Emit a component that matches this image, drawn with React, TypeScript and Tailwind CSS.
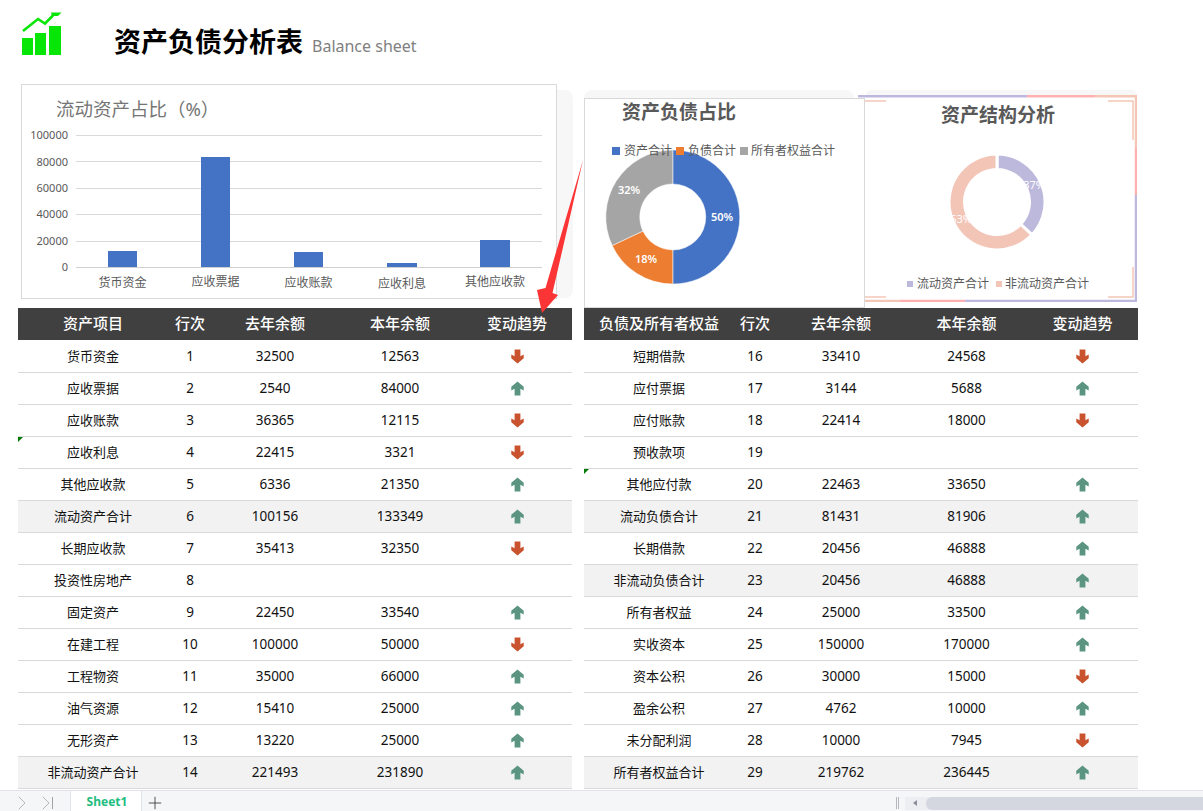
import { ChevronRight, Plus } from "lucide-react";

type Row = [string, number, number | null, number | null, "up" | "down" | null, boolean?];

const leftRows: Row[] = [
  ["货币资金", 1, 32500, 12563, "down"],
  ["应收票据", 2, 2540, 84000, "up"],
  ["应收账款", 3, 36365, 12115, "down"],
  ["应收利息", 4, 22415, 3321, "down"],
  ["其他应收款", 5, 6336, 21350, "up"],
  ["流动资产合计", 6, 100156, 133349, "up", true],
  ["长期应收款", 7, 35413, 32350, "down"],
  ["投资性房地产", 8, null, null, null],
  ["固定资产", 9, 22450, 33540, "up"],
  ["在建工程", 10, 100000, 50000, "down"],
  ["工程物资", 11, 35000, 66000, "up"],
  ["油气资源", 12, 15410, 25000, "up"],
  ["无形资产", 13, 13220, 25000, "up"],
  ["非流动资产合计", 14, 221493, 231890, "up", true],
];

const rightRows: Row[] = [
  ["短期借款", 16, 33410, 24568, "down"],
  ["应付票据", 17, 3144, 5688, "up"],
  ["应付账款", 18, 22414, 18000, "down"],
  ["预收款项", 19, null, null, null],
  ["其他应付款", 20, 22463, 33650, "up"],
  ["流动负债合计", 21, 81431, 81906, "up", true],
  ["长期借款", 22, 20456, 46888, "up"],
  ["非流动负债合计", 23, 20456, 46888, "up", true],
  ["所有者权益", 24, 25000, 33500, "up"],
  ["实收资本", 25, 150000, 170000, "up"],
  ["资本公积", 26, 30000, 15000, "down"],
  ["盈余公积", 27, 4762, 10000, "up"],
  ["未分配利润", 28, 10000, 7945, "down"],
  ["所有者权益合计", 29, 219762, 236445, "up", true],
];

function arc(cx: number, cy: number, r0: number, r1: number, from: number, to: number) {
  const p = (r: number, f: number) => {
    const a = f * Math.PI * 2 - Math.PI / 2;
    return `${(cx + r * Math.cos(a)).toFixed(2)} ${(cy + r * Math.sin(a)).toFixed(2)}`;
  };
  const large = to - from > 0.5 ? 1 : 0;
  return `M${p(r1, from)}A${r1} ${r1} 0 ${large} 1 ${p(r1, to)}L${p(r0, to)}A${r0} ${r0} 0 ${large} 0 ${p(r0, from)}Z`;
}

function TrendIcon({ dir }: { dir: "up" | "down" | null }) {
  if (!dir) return null;
  if (dir === "down") {
    return (
      <svg width="13" height="15" viewBox="0 0 12 14" className="block">
        <path d="M3.3 0.5h5.4v6.2l3.1-1.6v3.6L6 13.5 0.2 8.7V5.1l3.1 1.6z" fill="#c9532f" />
      </svg>
    );
  }
  return (
    <svg width="13" height="15" viewBox="0 0 12 14" className="block">
      <path d="M3.3 13.5h5.4V7.3l3.1 1.6V5.3L6 0.5 0.2 5.3v3.6l3.1-1.6z" fill="#5b9582" />
    </svg>
  );
}

function DataTable({
  title,
  cols,
  rows,
  markAt,
}: {
  title: string;
  cols: string;
  rows: Row[];
  markAt: number;
}) {
  return (
    <div className="w-[554px]">
      <div className={`grid ${cols} h-8 items-center bg-[#404040] pb-px text-center text-[15px] font-medium text-white`}>
        <div>{title}</div>
        <div>行次</div>
        <div>去年余额</div>
        <div>本年余额</div>
        <div>变动趋势</div>
      </div>
      <div className="pt-px">
        {rows.map((r, i) => (
          <div
            key={r[1]}
            className={`relative grid ${cols} h-8 items-center border-b border-[#d9d9d9] text-center text-[13.5px] text-[#111] ${
              r[5] ? "bg-[#f2f2f2]" : "bg-white"
            }`}
          >
            {i === markAt && (
              <span className="absolute top-0 left-0 h-0 w-0 border-t-[5px] border-r-[5px] border-t-[#007a00] border-r-transparent" />
            )}
            <div className="text-[13px]">{r[0]}</div>
            <div>{r[1]}</div>
            <div>{r[2]}</div>
            <div>{r[3]}</div>
            <div className="flex justify-center">
              <TrendIcon dir={r[4]} />
            </div>
          </div>
        ))}
      </div>
    </div>
  );
}

function BarChart() {
  const grid = [135, 161, 188, 214, 241];
  const ticks = ["100000", "80000", "60000", "40000", "20000", "0"];
  const bars = [
    { x: 108, w: 29, top: 251, label: "货币资金", ly: 286.5 },
    { x: 201, w: 29, top: 157, label: "应收票据", ly: 286 },
    { x: 294, w: 29, top: 252, label: "应收账款", ly: 286.5 },
    { x: 387, w: 30, top: 263, label: "应收利息", ly: 287.5 },
    { x: 480, w: 30, top: 240, label: "其他应收款", ly: 286 },
  ];
  return (
    <svg viewBox="22 85 534 213" className="block h-full w-full">
      <text x="56" y="116" fontSize="18.5" fill="#757575">
        流动资产占比（%）
      </text>
      {grid.map((y) => (
        <line key={y} x1="76" x2="542" y1={y + 0.5} y2={y + 0.5} stroke="#d9d9d9" />
      ))}
      <line x1="76" x2="542" y1="267.5" y2="267.5" stroke="#d0d0d0" />
      {ticks.map((t, i) => (
        <text key={t} x="68" y={[139, 166, 192, 218, 245, 271][i]} fontSize="11" textAnchor="end" fill="#595959">
          {t}
        </text>
      ))}
      {bars.map((b) => (
        <g key={b.label}>
          <rect x={b.x} y={b.top} width={b.w} height={267 - b.top} fill="#4472c4" />
          <text x={b.x + b.w / 2} y={b.ly} fontSize="12" textAnchor="middle" fill="#595959">
            {b.label}
          </text>
        </g>
      ))}
    </svg>
  );
}

function RatioChart() {
  const cx = 672.8;
  const cy = 217;
  return (
    <svg viewBox="585 99 279 208" className="block h-full w-full">
      <text x="622" y="119" fontSize="19" fontWeight="600" fill="#595959">
        资产负债占比
      </text>
      <path d={arc(cx, cy, 33, 67, 0, 0.5)} fill="#4472c4" stroke="#fff" strokeWidth="0.5" />
      <path d={arc(cx, cy, 33, 67, 0.5, 0.68)} fill="#ed7d31" stroke="#fff" strokeWidth="0.5" />
      <path d={arc(cx, cy, 33, 67, 0.68, 1)} fill="#a5a5a5" stroke="#fff" strokeWidth="0.5" />
      <rect x="612" y="147" width="8" height="8" fill="#4472c4" />
      <text x="624" y="155" fontSize="12" fill="#595959">
        资产合计
      </text>
      <rect x="676" y="147" width="8" height="8" fill="#ed7d31" />
      <text x="688" y="155" fontSize="12" fill="#595959">
        负债合计
      </text>
      <rect x="740" y="147" width="8" height="8" fill="#a5a5a5" />
      <text x="751" y="155" fontSize="12" fill="#595959">
        所有者权益合计
      </text>
      <g fontSize="11" fontWeight="600" fill="#fff" textAnchor="middle">
        <text x="722" y="221">
          50%
        </text>
        <text x="646" y="263">
          18%
        </text>
        <text x="629" y="194">
          32%
        </text>
      </g>
    </svg>
  );
}

function StructureChart() {
  const cx = 997;
  const cy = 202;
  return (
    <svg viewBox="858 95 279 207" className="block h-full w-full">
      {/* 边框 */}
      <g fill="none" strokeWidth="2.5">
        <path d="M858 96.2H1027" stroke="#bdb9de" />
        <path d="M1027 96.2H1095" stroke="#ffb1b1" />
        <path d="M1095 96.2H1136V148" stroke="#f4c6b6" />
        <path d="M1136 148V195" stroke="#ffb1b1" />
        <path d="M1136 195V301H965" stroke="#bdb9de" />
        <path d="M965 301H900" stroke="#ffb1b1" />
        <path d="M900 301H858" stroke="#f4c6b6" />
      </g>
      <g fill="none" stroke="#f4c6b6" strokeWidth="1.5">
        <path d="M865 101H886" />
        <path d="M1108 101H1133V140" />
        <path d="M1133 267V297H1108" />
        <path d="M865 297H886" />
      </g>
      <text x="998" y="122" fontSize="19" fontWeight="700" fill="#595959" textAnchor="middle">
        资产结构分析
      </text>
      <path d={arc(cx, cy, 32.5, 48, 0, 0.37)} fill="#bdb9dc" stroke="#fff" strokeWidth="3" />
      <path d={arc(cx, cy, 32.5, 48, 0.37, 1)} fill="#f3c5b6" stroke="#fff" strokeWidth="3" />
      <g fontSize="11" fill="#fff" textAnchor="middle">
        <text x="1034" y="189">
          37%
        </text>
        <text x="961" y="223">
          63%
        </text>
      </g>
      <rect x="907" y="281" width="6" height="6" fill="#bdb9dc" />
      <text x="917" y="288" fontSize="12" fill="#595959">
        流动资产合计
      </text>
      <rect x="996" y="281" width="6" height="6" fill="#f3c5b6" />
      <text x="1005" y="288" fontSize="12" fill="#595959">
        非流动资产合计
      </text>
    </svg>
  );
}

export default function App() {
  return (
    <div className="relative flex h-[811px] w-[1203px] flex-col overflow-hidden bg-white font-['Noto_Sans','Noto_Sans_CJK_SC',sans-serif]">
      {/* 标题 */}
      <div className="flex h-[84px] shrink-0 items-start pt-[10px] pl-[21px]">
        <svg width="42" height="46" viewBox="21 10 42 46" className="block">
          <path d="M23 31L38 19L45 23.5L53 15.5" fill="none" stroke="#08e608" strokeWidth="2.6" />
          <path d="M51 12.5H61.5L58 16L52 16z" fill="#08e608" />
          <rect x="22" y="38" width="11" height="17" fill="#08e608" />
          <rect x="35" y="33" width="11" height="22" fill="#08e608" />
          <rect x="49" y="26" width="12" height="29" fill="#08e608" />
        </svg>
        <div className="mt-[13px] ml-[51px] flex items-baseline">
          <span className="text-[27px] leading-[38px] font-bold text-black">资产负债分析表</span>
          <span className="ml-[9px] text-[16px] text-[#808080]">Balance sheet</span>
        </div>
      </div>

      {/* 图表 */}
      <div className="relative flex h-[224px] shrink-0 items-start">
        {/* 图表背后的浅灰底 */}
        <div className="absolute top-[6px] left-[584px] h-[8px] w-[270px] rounded-t-lg bg-[#f7f7f7]" />
        <div className="absolute top-[6px] left-[866px] h-[5px] w-[271px] rounded-t-lg bg-[#f7f7f7]" />

        <div className="relative ml-[21px] h-[215px] w-[536px] border border-[#d9d9d9] bg-white">
          <BarChart />
        </div>
        <div className="mt-[6px] h-[208px] w-[16px] rounded-r-lg bg-[#f7f7f7]" />
        <div className="relative z-10 mt-[14px] ml-[11px] h-[210px] w-[281px] border border-[#d9d9d9] bg-white">
          <RatioChart />
        </div>
        <div className="mt-[11px] -ml-[7px] h-[207px] w-[279px]">
          <StructureChart />
        </div>
      </div>

      {/* 数据表 */}
      <div className="flex h-[482px] shrink-0 gap-3 pl-[18px]">
        <DataTable
          title="资产项目"
          cols="grid-cols-[150px_44px_126px_124px_110px]"
          rows={leftRows}
          markAt={3}
        />
        <DataTable
          title="负债及所有者权益"
          cols="grid-cols-[150px_42px_130px_121px_111px]"
          rows={rightRows}
          markAt={4}
        />
      </div>

      {/* 工作表标签栏 */}
      <div className="flex flex-1 items-stretch border-t border-[#e1e3e8] bg-[#f5f6f8]">
        <div className="flex w-[70px] items-center pl-[10px] text-[#a3a3a3]">
          <ChevronRight size={24} strokeWidth={0.75} />
          <ChevronRight size={24} strokeWidth={0.75} />
          <span className="-ml-[6px] h-[12px] w-px bg-[#a3a3a3]" />
        </div>
        <div className="flex w-[72px] items-center justify-center border-x border-[#e1e3e8] bg-white pb-[2px] pl-[2px] text-[12px] font-bold text-[#22bd7f]">
          Sheet1
        </div>
        <div className="ml-[3px] flex items-center text-[#333]">
          <Plus size={20} strokeWidth={1} />
        </div>
        <div className="ml-auto flex w-[307px] items-center">
          <span className="h-[12px] w-[3px] border-x border-[#b5b8bf]" />
          <div className="ml-[6px] flex h-[13px] flex-1 items-center bg-[#eceef2] pl-[8px]">
            <span className="h-0 w-0 border-y-[3px] border-r-[4px] border-y-transparent border-r-[#8a8f99]" />
            <span className="ml-[9px] h-[13px] flex-1 rounded-l-md bg-[#d4d7df]" />
          </div>
        </div>
      </div>

      {/* 红色箭头 */}
      <svg
        width="60"
        height="170"
        viewBox="530 150 60 170"
        className="absolute top-[150px] left-[530px] z-20"
      >
        <path d="M583 160L552.5 293L558 295L542 313L537 290L545.5 288z" fill="#fb3535" />
      </svg>
    </div>
  );
}
